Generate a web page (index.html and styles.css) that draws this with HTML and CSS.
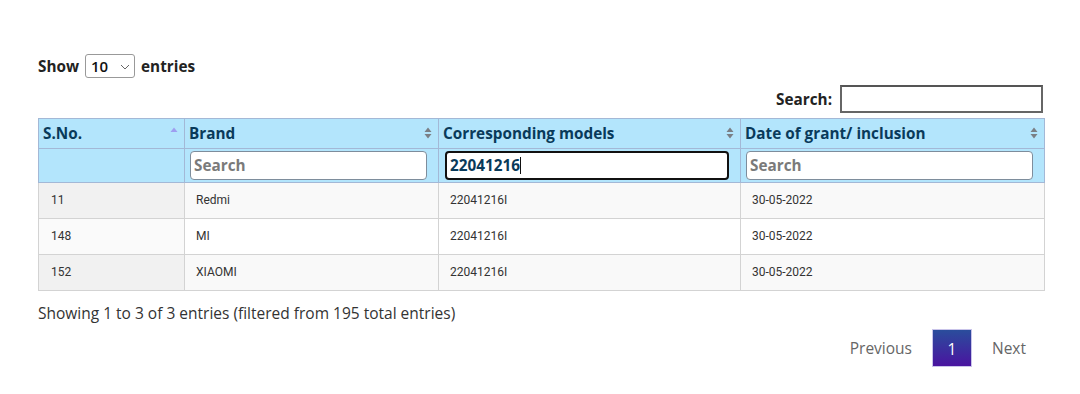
FILE: index.html
```html
<!DOCTYPE html>
<html>
<head>
<meta charset="utf-8">
<link rel="stylesheet" href="styles.css">
</head>
<body>
<div class="wrap">
  <div class="length">
    <label>Show
      <span class="select">10<svg class="chev" width="10" height="6" viewBox="0 0 10 6"><path d="M1 1 L5 5 L9 1" fill="none" stroke="#666" stroke-width="1"/></svg></span>
      entries</label>
  </div>
  <div class="filter">
    <label>Search:</label><span class="gsearch"></span>
  </div>
  <table class="grid">
    <colgroup>
      <col class="c1"><col class="c2"><col class="c3"><col class="c4">
    </colgroup>
    <thead>
      <tr class="head">
        <th><span>S.No.</span><svg class="sort" width="8" height="14" viewBox="0 0 8 14"><path d="M0.5 6 L4 1.5 L7.5 6 Z" fill="#9e9ef0"/></svg></th>
        <th><span>Brand</span><svg class="sort" width="8" height="14" viewBox="0 0 8 14"><path d="M0.5 6 L4 1.5 L7.5 6 Z M0.5 8 L4 12.5 L7.5 8 Z" fill="#7a7f85"/></svg></th>
        <th><span>Corresponding models</span><svg class="sort" width="8" height="14" viewBox="0 0 8 14"><path d="M0.5 6 L4 1.5 L7.5 6 Z M0.5 8 L4 12.5 L7.5 8 Z" fill="#7a7f85"/></svg></th>
        <th><span>Date of grant/ inclusion</span><svg class="sort" width="8" height="14" viewBox="0 0 8 14"><path d="M0.5 6 L4 1.5 L7.5 6 Z M0.5 8 L4 12.5 L7.5 8 Z" fill="#7a7f85"/></svg></th>
      </tr>
      <tr class="filters">
        <th></th>
        <th><span class="fin ph">Search</span></th>
        <th><span class="fin focus">22041216<i class="caret"></i></span></th>
        <th><span class="fin ph">Search</span></th>
      </tr>
    </thead>
    <tbody>
      <tr class="odd"><td class="sorted">11</td><td>Redmi</td><td>22041216I</td><td>30-05-2022</td></tr>
      <tr class="even"><td class="sorted">148</td><td>MI</td><td>22041216I</td><td>30-05-2022</td></tr>
      <tr class="odd"><td class="sorted">152</td><td>XIAOMI</td><td>22041216I</td><td>30-05-2022</td></tr>
    </tbody>
  </table>
  <div class="info">Showing 1 to 3 of 3 entries (filtered from 195 total entries)</div>
  <div class="paging">
    <span class="pbtn">Previous</span>
    <span class="pbtn current">1</span>
    <span class="pbtn">Next</span>
  </div>
</div>
</body>
</html>
```

FILE: styles.css
```css
html, body { margin: 0; padding: 0; background: #fff; }
body { font-family: "Open Sans", sans-serif; color: #333; }
.wrap { width: 1006px; margin-left: 38px; padding-top: 54px; }
.length { height: 24px; font-size: 15.3px; font-weight: 700; color: #222; }
.length label { display: flex; align-items: center; gap: 6px; height: 24px; }
.select { display: inline-flex; align-items: center; justify-content: space-between; box-sizing: border-box; width: 50px; height: 24px; border: 1px solid #999; border-radius: 3px; padding: 0 4px 0 5px; font-weight: 600; font-size: 15px; color: #111; }
.chev { margin-top: 1px; }
.filter { display: flex; justify-content: flex-end; align-items: center; gap: 8px; margin-top: 7px; height: 28px; font-size: 15.3px; font-weight: 700; color: #222; }
.gsearch { display: block; box-sizing: border-box; width: 203px; height: 28px; border: 2px solid #666; border-top-color: #555; margin-right: 1px; }
.grid { width: 1006px; border-collapse: collapse; table-layout: fixed; margin-top: 5px; }
.c1 { width: 146px; } .c2 { width: 254px; } .c3 { width: 302px; } .c4 { width: 304px; }
.grid th { background: #b3e5fc; border: 1px solid #a3b8d6; text-align: left; padding: 0 4px; font-weight: 700; color: #093a5a; font-size: 15.3px; }
.head th { height: 29px; position: relative; }
.head th span { display: block; line-height: 29px; }
.sort { position: absolute; right: 6px; top: 7px; }
.filters th { height: 33px; }
.fin { display: block; box-sizing: border-box; height: 29px; line-height: 27px; border: 1px solid #7e8d9c; border-radius: 4px; background: #fff; padding: 0 3px; font-size: 15.3px; font-weight: 700; margin: 0 7px 0 1px; }
.fin.ph { color: #7a7a7a; }
.fin.focus { border: 2px solid #111; line-height: 25px; padding: 0 3px; color: #093a5a; border-radius: 4px; margin-left: 2px; }
.caret { display: inline-block; width: 1px; height: 17px; background: #111; vertical-align: -3px; }
.grid td { height: 33px; border: 1px solid #d3d3d3; padding: 0 11px 2px; font-family: Roboto, sans-serif; font-size: 12px; color: #333; }
.grid td:first-child { padding-left: 12px; }
.odd td { background: #f9f9f9; }
.even td { background: #fff; }
.odd td.sorted { background: #f1f1f1; }
.even td.sorted { background: #fafafa; }
.info { margin-top: 11px; font-size: 15.5px; color: #333; height: 22px; }
.paging { display: flex; justify-content: flex-end; align-items: center; margin-top: 5px; padding-right: 2px; height: 38px; }
.pbtn { font-size: 15.5px; color: #666; padding: 0 16px; line-height: 38px; }
.pbtn.current { box-sizing: border-box; width: 40px; height: 38px; padding: 0; text-align: center; color: #fff; background: linear-gradient(#2a4d9c, #4a14a0); border: 1px solid #c9c4ea; margin: 0 4px 0 4px; }
```
